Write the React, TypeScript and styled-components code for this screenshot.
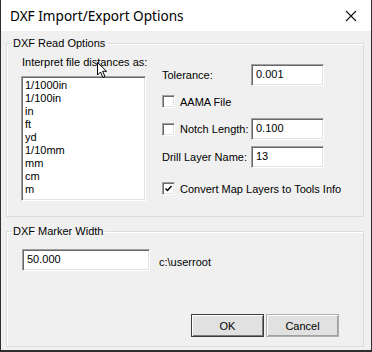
import React from "react";
import styled, { createGlobalStyle } from "styled-components";

const GlobalStyle = createGlobalStyle`
  html, body {
    margin: 0;
    padding: 0;
    background: #ffffff;
  }
  * {
    box-sizing: border-box;
  }
`;

const Window = styled.div`
  position: relative;
  width: 372px;
  height: 352px;
  background: #f0f0f0;
  border-left: 1px solid #2f2f2f;
  border-right: 1px solid #2f2f2f;
  border-bottom: 2px solid #2f2f2f;
  font-family: "Liberation Sans", Arial, sans-serif;
  font-size: 11px;
  color: #000;
  display: flex;
  flex-direction: column;
`;

const TitleBar = styled.div`
  height: 31px;
  background: #fff;
  display: flex;
  align-items: center;
  justify-content: space-between;
  padding: 0 10px 0 9px;
  font-family: "Noto Sans", "Open Sans", sans-serif;
  font-size: 13.6px;
`;

const CloseBtn = styled.div`
  width: 12px;
  height: 12px;
  margin-right: 4px;
  display: flex;
`;

const Body = styled.div`
  flex: 1;
  display: flex;
  flex-direction: column;
  gap: 8px;
  padding: 6px 7px 0 5px;
`;

const Group = styled.fieldset<{ $h: number }>`
  margin: 0;
  height: ${(p) => p.$h}px;
  border: 1px solid #dcdcdc;
  box-shadow: inset 1px 1px 0 #fff;
  padding: 0;
  min-width: 0;
`;

const Legend = styled.legend`
  padding: 0 2px 0 1px;
  margin-left: 5px;
  line-height: 13px;
`;

const ReadContent = styled.div`
  display: flex;
  padding: 6px 0 0 14px;
`;

const LeftCol = styled.div`
  display: flex;
  flex-direction: column;
  width: 125px;
`;

const Caption = styled.div`
  line-height: 13px;
  height: 13px;
  margin: 0 0 7px 1px;
  white-space: nowrap;
`;

const sunken = `
  border: 1px solid;
  border-color: #a0a0a0 #ffffff #ffffff #a0a0a0;
  box-shadow: inset 1px 1px 0 #696969, inset -1px -1px 0 #e3e3e3;
  background: #fff;
`;

const ListBox = styled.div`
  ${sunken}
  width: 125px;
  height: 125px;
  padding: 2px 3px;
`;

const ListItem = styled.div`
  line-height: 13px;
  height: 13px;
`;

const RightCol = styled.div`
  margin: 8px 0 0 16px;
  display: grid;
  grid-template-columns: 89px 73px;
  grid-template-rows: 31px 23px 28px 36px 13px;
  align-items: start;
`;

const Label = styled.div<{ $span?: boolean; $h?: number }>`
  display: flex;
  align-items: center;
  gap: 5px;
  height: ${(p) => p.$h ?? 22}px;
  white-space: nowrap;
  grid-column: ${(p) => (p.$span ? "1 / span 2" : "auto")};
`;

const TextBox = styled.div<{ $w: number }>`
  ${sunken}
  width: ${(p) => p.$w}px;
  height: 22px;
  padding: 3px 0 0 4px;
  line-height: 13px;
`;

const Box = styled.span`
  ${sunken}
  width: 13px;
  height: 13px;
  display: inline-flex;
  align-items: center;
  justify-content: center;
  flex: none;
`;

const MarkerContent = styled.div`
  display: flex;
  flex-direction: column;
  padding: 11px 24px 0 15px;
`;

const MarkerRow = styled.div`
  display: flex;
  align-items: flex-start;
  gap: 9px;
`;

const Path = styled.div`
  margin-top: 7px;
  line-height: 13px;
`;

const Buttons = styled.div`
  display: flex;
  justify-content: flex-end;
  gap: 2px;
  margin-top: 43px;
`;

const Button = styled.div<{ $default?: boolean }>`
  width: 73px;
  height: 23px;
  display: flex;
  align-items: center;
  justify-content: center;
  background: #e1e1e1;
  border: 1px solid ${(p) => (p.$default ? "#3c3c3c" : "#adadad")};
  box-shadow: ${(p) =>
    p.$default
      ? "inset 1px 1px 0 #fff, inset -1px -1px 0 #7a7a7a"
      : "inset 1px 1px 0 #fff, inset -1px -1px 0 #a0a0a0"};
`;

const Cursor = styled.svg`
  position: absolute;
  left: 96px;
  top: 62px;
`;

const Check = () => (
  <svg width="9" height="9" viewBox="0 0 9 9">
    <path d="M1.5 4.5 L3.5 6.5 L7.5 2" stroke="#000" strokeWidth="1.5" fill="none" />
  </svg>
);

const units = ["1/1000in", "1/100in", "in", "ft", "yd", "1/10mm", "mm", "cm", "m"];

const App: React.FC = () => {
  return (
    <>
      <GlobalStyle />
      <Window>
        <TitleBar>
          <span>DXF Import/Export Options</span>
          <CloseBtn>
            <svg width="12" height="12" viewBox="0 0 12 12">
              <path d="M1 1 L11 11 M11 1 L1 11" stroke="#111" strokeWidth="1.1" />
            </svg>
          </CloseBtn>
        </TitleBar>
        <Body>
          <Group $h={180}>
            <Legend>DXF Read Options</Legend>
            <ReadContent>
              <LeftCol>
                <Caption>Interpret file distances as:</Caption>
                <ListBox>
                  {units.map((u) => (
                    <ListItem key={u}>{u}</ListItem>
                  ))}
                </ListBox>
              </LeftCol>
              <RightCol>
                <Label>Tolerance:</Label>
                <TextBox $w={73}>0.001</TextBox>
                <Label $span $h={13}>
                  <Box />
                  AAMA File
                </Label>
                <Label>
                  <Box />
                  Notch Length:
                </Label>
                <TextBox $w={73}>0.100</TextBox>
                <Label>Drill Layer Name:</Label>
                <TextBox $w={73}>13</TextBox>
                <Label $span $h={13}>
                  <Box>
                    <Check />
                  </Box>
                  Convert Map Layers to Tools Info
                </Label>
              </RightCol>
            </ReadContent>
          </Group>
          <Group $h={122}>
            <Legend>DXF Marker Width</Legend>
            <MarkerContent>
              <MarkerRow>
                <TextBox $w={128}>50.000</TextBox>
                <Path>c:\userroot</Path>
              </MarkerRow>
              <Buttons>
                <Button $default>OK</Button>
                <Button>Cancel</Button>
              </Buttons>
            </MarkerContent>
          </Group>
        </Body>
        <Cursor width="12" height="17" viewBox="0 0 12 17">
          <path d="M0.5 0.5 L0.5 13 L3.5 10 L6 15.5 L8 14.5 L5.6 9.3 L9.6 9.3 Z" fill="#fff" stroke="#000" strokeWidth="1" />
        </Cursor>
      </Window>
    </>
  );
};

export default App;
